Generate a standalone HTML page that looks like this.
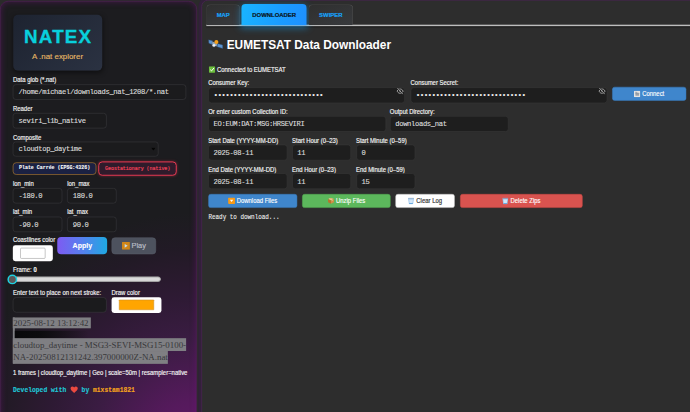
<!DOCTYPE html>
<html lang="en">
<head>
<meta charset="utf-8">
<title>NATEX - A .nat explorer</title>
<style>
html,body{margin:0;padding:0;overflow:hidden;}
body{position:relative;width:690px;height:412px;overflow:hidden;background:#2a2a2a;}
#w{position:absolute;left:0;top:0;width:1398px;height:836px;transform:scale(0.4937);transform-origin:0 0;
  font-family:"Liberation Sans",Arial,sans-serif;font-size:12px;color:#f0f0f0;overflow:hidden;background:#2a2a2a;}
#w *{box-sizing:border-box;}
.abs,#w div,#w span.a,#w svg{position:absolute;}
.mono{font-family:"Liberation Mono","DejaVu Sans Mono",monospace;}
.serif{font-family:"Liberation Serif","DejaVu Serif",serif;}

/* panels */
#side{left:0;top:2px;width:399px;height:900px;border:1.6px solid #5e1a66;border-radius:17px;
  background:radial-gradient(circle at 100% 100%,#621a68 0px,#551a5c 91px,#3a1c42 215px,#2e1a34 300px,#281a2c 351px,#221a26 394px,#1c1c1f 470px);
  box-shadow:inset 0 0 12px 0 rgba(120,20,130,.48);}
#main{left:408px;top:-0.3px;width:1010px;height:900px;border:1.7px solid #582466;border-radius:13px;background:#2d2d2d;box-shadow:0 0 0 6px #32203a;}

/* labels */
.lb{white-space:nowrap;font-size:12px;line-height:14px;color:#f4f4f4;-webkit-text-stroke:0.28px #f4f4f4;transform:scaleY(1.14);transform-origin:0 80%;}
/* inputs */
.in{background:#1b1b1d;border:1.3px solid #404043;border-radius:6px;color:#dcdcdc;
  font-family:"Liberation Mono","DejaVu Sans Mono",monospace;font-size:14.5px;letter-spacing:-0.7px;line-height:28.8px;padding-left:10.3px;padding-top:0.7px;-webkit-text-stroke:0.25px #dcdcdc;white-space:nowrap;overflow:hidden;}
.inm{background:#1e1e1e;border:1.3px solid #3c3c3c;padding-left:9.6px;line-height:29.4px;padding-top:2.3px;}
.pw{font-size:15.5px;letter-spacing:-1.38px;line-height:28px;padding-top:0.8px;padding-left:9.4px;-webkit-text-stroke:0;color:#ececec;}
.hl{font-size:18px;white-space:nowrap;color:#38383a;background:#7f7f83;padding-left:0.6px;}
.sy{display:inline-block;transform:scaleY(1.14);transform-origin:0 62%;}
/* buttons */
.bt{border-radius:4px;text-align:center;font-size:12px;white-space:nowrap;color:#fff;-webkit-text-stroke:0.22px #fff;}
</style>
</head>
<body>
<div id="w">

<!-- ================= SIDEBAR ================= -->
<div id="side"></div>

<div id="logo" style="left:26.6px;top:29.8px;width:180px;height:113.4px;border-radius:10px;background:linear-gradient(135deg,#1d2330 0%,#2b3242 100%);box-shadow:0 3px 10px rgba(0,0,0,.45);"></div>
<div id="natex" style="left:26.6px;top:52.2px;-webkit-text-stroke:0.7px #08d0dc;width:180px;text-align:center;font-weight:bold;font-size:38px;line-height:44px;letter-spacing:2.5px;text-indent:2.5px;color:#08d0dc;">NATEX</div>
<div id="tag" style="left:26.6px;top:105px;width:180px;text-align:center;font-size:16px;line-height:20px;color:#e6b866;-webkit-text-stroke:0.25px #e6b866;">A .nat explorer</div>

<div class="lb" style="left:26.3px;top:154.6px;">Data glob (*.nat)</div>
<div class="in" style="left:26.3px;top:171.2px;width:350.4px;height:30.8px;">/home/michael/downloads_nat_1208/*.nat</div>

<div class="lb" style="left:26.3px;top:212.6px;">Reader</div>
<div class="in" style="left:26.3px;top:228.9px;width:190.0px;height:30.8px;">seviri_l1b_native</div>

<div class="lb" style="left:26.3px;top:271.6px;">Composite</div>
<div class="in" style="left:26.3px;top:286.5px;width:295.0px;height:30.8px;">cloudtop_daytime</div>
<svg style="left:305.6px;top:298.6px;" width="9.4" height="6.4" viewBox="0 0 10 7"><path d="M0.3 0.3 L9.7 0.3 L5 6.7 Z" fill="#050505"/></svg>

<div class="bt mono" style="left:26.3px;top:329.1px;width:168.5px;height:24.6px;border:1.6px solid #d9952f;border-radius:7px;background:#1b2142;font-size:10px;line-height:21.5px;font-weight:bold;color:#fafafa;-webkit-text-stroke:0.2px #fafafa;">Plate Carrée (EPSG:4326)</div>
<div class="bt mono" style="left:199.4px;top:326.6px;width:159px;height:29px;border:2.2px solid #e63a52;border-radius:8px;background:#2f1b2b;font-size:10px;line-height:26.4px;color:#f2425a;-webkit-text-stroke:0.35px #f2425a;box-shadow:0 0 6px rgba(226,54,80,.5);">Geostationary (native)</div>

<div class="lb" style="left:26.3px;top:364.7px;">lon_min</div>
<div class="lb" style="left:136.1px;top:364.7px;">lon_max</div>
<div class="in" style="left:26.3px;top:381.4px;width:100.0px;height:30.8px;">-180.0</div>
<div class="in" style="left:136.1px;top:381.4px;width:100.0px;height:30.8px;">180.0</div>

<div class="lb" style="left:26.3px;top:422.7px;">lat_min</div>
<div class="lb" style="left:136.1px;top:422.7px;">lat_max</div>
<div class="in" style="left:26.3px;top:438.9px;width:100.0px;height:30.8px;">-90.0</div>
<div class="in" style="left:136.1px;top:438.9px;width:100.0px;height:30.8px;">90.0</div>

<div class="lb" style="left:26.3px;top:479.4px;">Coastlines color</div>
<div id="coast" style="left:26.3px;top:496.9px;width:81px;height:32.2px;border-radius:5px;background:#fff;"></div>
<div style="left:40.6px;top:502.1px;width:51.6px;height:21.9px;border:1.2px solid #8c8c8c;border-radius:2.5px;background:#fff;"></div>

<div class="bt" id="apply" style="left:116.3px;top:480px;width:101px;height:35.4px;border-radius:8px;background:linear-gradient(90deg,#7d5bf2 0%,#5680ee 50%,#1fa9e2 100%);font-weight:bold;font-size:14.2px;line-height:35px;">Apply</div>
<div class="bt" id="play" style="left:226px;top:480.5px;width:90px;height:34px;border-radius:7px;background:#4d525e;border:1px solid #5a5f6c;font-size:15px;line-height:32px;color:#bcbfc9;-webkit-text-stroke:0.3px #bcbfc9;padding-left:20px;">Play</div>
<svg style="left:246.9px;top:489.8px;" width="16.6" height="16" viewBox="0 0 16.6 16"><rect x="0" y="0" width="16.6" height="16" rx="1.6" fill="#d08618"/><path d="M5.6 4 L11.6 7.8 L5.6 11.6 Z" fill="#c4dcee"/></svg>

<div class="lb" style="left:26.3px;top:538.5px;">Frame: <b>0</b></div>
<div id="track" style="left:17.6px;top:559.8px;width:308.3px;height:11.6px;border-radius:6px;border:2.6px solid #a6a6a6;background:#dadada;"></div>
<div id="thumb" style="left:14.8px;top:555.8px;width:20.6px;height:20.6px;border-radius:50%;border:3.4px solid #1fd3e2;background:#595959;"></div>

<div class="lb" style="left:26.3px;top:586.4px;">Enter text to place on next stroke:</div>
<div class="in" style="left:26.3px;top:602.0px;width:190.0px;height:30.8px;border-radius:7px;"></div>
<div class="lb" style="left:226.0px;top:586.4px;">Draw color</div>
<div id="draw" style="left:226.2px;top:601.6px;width:100.4px;height:32px;border-radius:5px;background:#fff;"></div>
<div style="left:241.1px;top:607.1px;width:70.5px;height:20.8px;border:1.2px solid #c48a28;border-radius:1px;background:#ffa500;"></div>

<!-- highlighted serif info block -->
<div style="left:26.3px;top:643.1px;width:3.4px;height:93.4px;background:#7f7f83;"></div>
<div style="left:29.6px;top:669.8px;width:150px;height:14.8px;background:linear-gradient(90deg,#08080a 0%,#0c0c0e 35%,rgba(12,12,14,0) 100%);"></div>
<div class="serif hl" style="left:26.3px;top:643.1px;height:21.5px;line-height:23.9px;padding-right:4.4px;">2025-08-12 13:12:42</div>
<div class="serif hl" style="left:26.3px;top:684.6px;height:26.8px;line-height:27.8px;">cloudtop_daytime - MSG3-SEVI-MSG15-0100-</div>
<div class="serif hl" style="left:26.3px;top:711.0px;height:25.5px;line-height:24.5px;">NA-20250812131242.397000000Z-NA.nat</div>

<div class="lb" style="left:26.3px;top:747.8px;">1 frames | cloudtop_daytime | Geo | scale=50m | resampler=native</div>

<div class="mono" style="left:26.3px;top:782px;font-size:12.85px;line-height:16px;font-weight:bold;white-space:pre;color:#20c9d9;-webkit-text-stroke:0.25px #20c9d9;">Developed with <svg style="position:relative;vertical-align:-2.5px;margin:0 -0.4px;" width="16.4" height="15" viewBox="0 0 15 14"><path d="M7.5 13.2 C3 9.5 0.6 7.2 0.6 4.3 C0.6 2.2 2.2 0.7 4.1 0.7 C5.5 0.7 6.8 1.5 7.5 2.8 C8.2 1.5 9.5 0.7 10.9 0.7 C12.8 0.7 14.4 2.2 14.4 4.3 C14.4 7.2 12 9.5 7.5 13.2 Z" fill="#ec4a40"/></svg> by <span style="color:#f6a51c;-webkit-text-stroke:0.25px #f6a51c;">mixstam1821</span></div>

<!-- ================= MAIN ================= -->
<div id="main"></div>

<!-- tabs -->
<div style="left:418px;top:50.2px;width:1000px;height:2.4px;background:#bdbdbd;box-shadow:0 2px 2px rgba(0,0,0,.55);"></div>
<div class="tab" style="left:418.1px;top:8.9px;width:68.1px;height:42px;border:1.4px solid #555;border-bottom:none;border-radius:8px 8px 0 0;background:linear-gradient(160deg,#2f2f2f,#383a3d);text-align:center;font-weight:bold;font-size:12px;line-height:43px;color:#16a6ff;-webkit-text-stroke:0.3px #16a6ff;">MAP</div>
<div class="tab" style="left:489.4px;top:7.7px;width:131.9px;height:43px;border-radius:8px 8px 0 0;background:linear-gradient(100deg,#19b4ff 0%,#1a9cff 60%,#1e90ff 100%);box-shadow:0 4px 16px 2px rgba(20,170,255,.45);text-align:center;font-weight:bold;font-size:12px;line-height:44px;color:#0a1420;-webkit-text-stroke:0.35px #0a1420;">DOWNLOADER</div>
<div class="tab" style="left:625.1px;top:9.1px;width:89.9px;height:42px;border:1.4px solid #555;border-bottom:none;border-radius:8px 8px 0 0;background:linear-gradient(160deg,#2f2f2f,#383a3d);text-align:center;font-weight:bold;font-size:12px;line-height:43px;color:#16a6ff;-webkit-text-stroke:0.3px #16a6ff;">SWIPER</div>

<!-- heading -->
<div style="left:459.2px;top:76px;font-weight:bold;font-size:24px;line-height:30px;white-space:nowrap;color:#fff;">EUMETSAT Data Downloader</div>
<svg id="sat" style="left:420px;top:76px;" width="34" height="26" viewBox="0 0 34 26">
  <polygon points="2.5,4.7 10.4,6.6 9.4,14.0 3.0,11.5" fill="#5b93cf" stroke="#2c4a70" stroke-width="0.8"/>
  <polygon points="20.2,12.0 31.1,15.0 31.1,22.4 19.8,18.9" fill="#5b93cf" stroke="#2c4a70" stroke-width="0.8"/>
  <polygon points="10,8 20,11.5 19,18 9.5,13.5" fill="#8fa3b8"/>
  <circle cx="18.3" cy="9.1" r="4.1" fill="#f4a01c"/>
  <circle cx="13.4" cy="15.7" r="3.1" fill="#eef2f6" stroke="#9fb0c2" stroke-width="0.7"/>
</svg>

<!-- status -->
<svg style="left:422.9px;top:134.4px;" width="13" height="13.4" viewBox="0 0 13 13"><rect x="0" y="0" width="13" height="13" rx="2" fill="#6cbe3e"/><path d="M2.8 6.8 L5.4 9.4 L10.3 3.6" stroke="#fff" stroke-width="2" fill="none"/></svg>
<div class="lb" style="left:439.5px;top:134.4px;">Connected to EUMETSAT</div>

<!-- row 1 -->
<div class="lb" style="left:421.8px;top:161.4px;">Consumer Key:</div>
<div class="in inm pw" style="left:422.1px;top:176.8px;width:398.2px;height:32px;">••••••••••••••••••••••••••••</div>
<svg class="eye" style="left:802.8px;top:177.2px;" width="15" height="15" viewBox="0 0 15 15"><path d="M1.2 7.6 C3.2 4.2 5.3 3.3 7.5 3.3 C9.7 3.3 11.8 4.2 13.8 7.6 C11.8 11 9.7 11.9 7.5 11.9 C5.3 11.9 3.2 11 1.2 7.6 Z" fill="none" stroke="#cfcfcf" stroke-width="1.5"/><circle cx="7.5" cy="7.6" r="1.7" fill="#cfcfcf"/><path d="M2.2 1.4 L12.8 13.8" stroke="#1e1e1e" stroke-width="3.2"/><path d="M2.2 1.4 L12.8 13.8" stroke="#d4d4d4" stroke-width="1.5"/></svg>
<div class="lb" style="left:831.6px;top:161.4px;">Consumer Secret:</div>
<div class="in inm pw" style="left:831.9px;top:176.8px;width:397.8px;height:32px;">••••••••••••••••••••••••••••</div>
<svg class="eye" style="left:1212.2px;top:177.2px;" width="15" height="15" viewBox="0 0 15 15"><path d="M1.2 7.6 C3.2 4.2 5.3 3.3 7.5 3.3 C9.7 3.3 11.8 4.2 13.8 7.6 C11.8 11 9.7 11.9 7.5 11.9 C5.3 11.9 3.2 11 1.2 7.6 Z" fill="none" stroke="#cfcfcf" stroke-width="1.5"/><circle cx="7.5" cy="7.6" r="1.7" fill="#cfcfcf"/><path d="M2.2 1.4 L12.8 13.8" stroke="#1e1e1e" stroke-width="3.2"/><path d="M2.2 1.4 L12.8 13.8" stroke="#d4d4d4" stroke-width="1.5"/></svg>
<div class="bt" style="left:1239.8px;top:176px;width:150px;height:28.4px;background:#3f86cc;border:1px solid #3a7dc0;border-radius:5px;line-height:26px;padding-left:16.6px;"><span class="sy">Connect</span></div>
<svg style="left:1284px;top:183.8px;" width="13" height="13" viewBox="0 0 13 13"><rect x="0" y="0" width="13" height="13" rx="1.8" fill="#e4e4e4"/><rect x="3" y="4" width="7.5" height="6" rx="0.8" fill="#9aa2ab"/><path d="M2.5 3 L6 3 L6 6.5" stroke="#7e8a96" stroke-width="1.3" fill="none"/></svg>

<!-- row 2 -->
<div class="lb" style="left:421.8px;top:219.4px;">Or enter custom Collection ID:</div>
<div class="in inm" style="left:422.1px;top:234.7px;width:359.6px;height:32px;">EO:EUM:DAT:MSG:HRSEVIRI</div>
<div class="lb" style="left:789.6px;top:219.4px;">Output Directory:</div>
<div class="in inm" style="left:790.0px;top:234.7px;width:240px;height:32px;">downloads_nat</div>

<!-- row 3 -->
<div class="lb" style="left:421.8px;top:277.6px;">Start Date (YYYY-MM-DD)</div>
<div class="in inm" style="left:422.1px;top:292.6px;width:159.6px;height:32px;">2025-08-11</div>
<div class="lb" style="left:591.6px;top:277.6px;">Start Hour (0–23)</div>
<div class="in inm" style="left:591.5px;top:292.6px;width:119.5px;height:32px;">11</div>
<div class="lb" style="left:721.0px;top:277.6px;">Start Minute (0–59)</div>
<div class="in inm" style="left:721.5px;top:292.6px;width:119.5px;height:32px;">0</div>

<!-- row 4 -->
<div class="lb" style="left:421.8px;top:336.9px;">End Date (YYYY-MM-DD)</div>
<div class="in inm" style="left:422.1px;top:350.5px;width:159.6px;height:32px;">2025-08-11</div>
<div class="lb" style="left:591.6px;top:336.9px;">End Hour (0–23)</div>
<div class="in inm" style="left:591.5px;top:350.5px;width:119.5px;height:32px;">11</div>
<div class="lb" style="left:721.0px;top:336.9px;">End Minute (0–59)</div>
<div class="in inm" style="left:721.5px;top:350.5px;width:119.5px;height:32px;">15</div>

<!-- buttons -->
<div class="bt" style="left:421.8px;top:392.8px;width:179.8px;height:28.2px;background:#3f86cc;border:1px solid #3a7dc0;border-radius:5px;line-height:26px;padding-left:17.5px;"><span class="sy">Download Files</span></div>
<svg style="left:462px;top:400px;" width="14" height="13" viewBox="0 0 14 13"><rect x="0" y="0" width="14" height="13" rx="1.6" fill="#f89a18"/><path d="M3.6 4.4 L10.4 4.4 L7 9.2 Z" fill="#fff"/></svg>
<div class="bt" style="left:611.9px;top:392.8px;width:179.3px;height:28.2px;background:#5cb85c;border:1px solid #52ad52;border-radius:5px;line-height:26px;padding-left:17.5px;"><span class="sy">Unzip Files</span></div>
<svg style="left:664.4px;top:400.3px;" width="13" height="13" viewBox="0 0 13 13"><polygon points="6.5,0.5 12.5,3.2 6.5,6 0.5,3.2" fill="#e2b070"/><polygon points="0.5,3.2 6.5,6 6.5,12.6 0.5,9.6" fill="#b8732c"/><polygon points="12.5,3.2 6.5,6 6.5,12.6 12.5,9.6" fill="#cf8f45"/><polygon points="3.2,1.9 9.4,4.7 9.4,7 8,7.6 8,5.3 2,2.5" fill="#f0d8a8"/></svg>
<div class="bt" style="left:800.5px;top:392.8px;width:120.1px;height:28.2px;background:#fff;border:1px solid #ccc;border-radius:5px;line-height:26px;padding-left:17.5px;color:#333;-webkit-text-stroke:0.3px #333;"><span class="sy">Clear Log</span></div>
<svg style="left:826.4px;top:399.6px;" width="13" height="14" viewBox="0 0 12 13"><path d="M0.6 2.2 L11.4 2.2 L10 12 Q9.9 12.7 9.2 12.7 L2.8 12.7 Q2.1 12.7 2 12 Z" fill="#9cc4ea"/><path d="M2.4 4 L9.6 4 L8.9 10.6 L3.1 10.6 Z" fill="#d3e6f7"/><path d="M2.6 10.2 L9.4 10.2 L9.2 12 L2.8 12 Z" fill="#5aa2dc"/><rect x="0.3" y="0.6" width="11.4" height="2" rx="0.8" fill="#86a9cc"/></svg>
<div class="bt" style="left:931.7px;top:392.8px;width:248px;height:28.2px;background:#d9534f;border:1px solid #d04a46;border-radius:5px;line-height:26px;padding-left:17.5px;"><span class="sy">Delete Zips</span></div>
<svg style="left:1016.8px;top:399.6px;" width="13" height="14" viewBox="0 0 12 13"><path d="M0.6 2.2 L11.4 2.2 L10 12 Q9.9 12.7 9.2 12.7 L2.8 12.7 Q2.1 12.7 2 12 Z" fill="#9cc4ea"/><path d="M2.4 4 L9.6 4 L8.9 10.6 L3.1 10.6 Z" fill="#d3e6f7"/><path d="M2.6 10.2 L9.4 10.2 L9.2 12 L2.8 12 Z" fill="#5aa2dc"/><rect x="0.3" y="0.6" width="11.4" height="2" rx="0.8" fill="#86a9cc"/></svg>

<div class="mono" style="left:422.2px;top:432px;font-size:12px;line-height:16px;white-space:pre;color:#ececec;-webkit-text-stroke:0.2px #ececec;transform:scaleY(1.12);transform-origin:0 75%;">Ready to download...</div>

</div>
</body>
</html>
